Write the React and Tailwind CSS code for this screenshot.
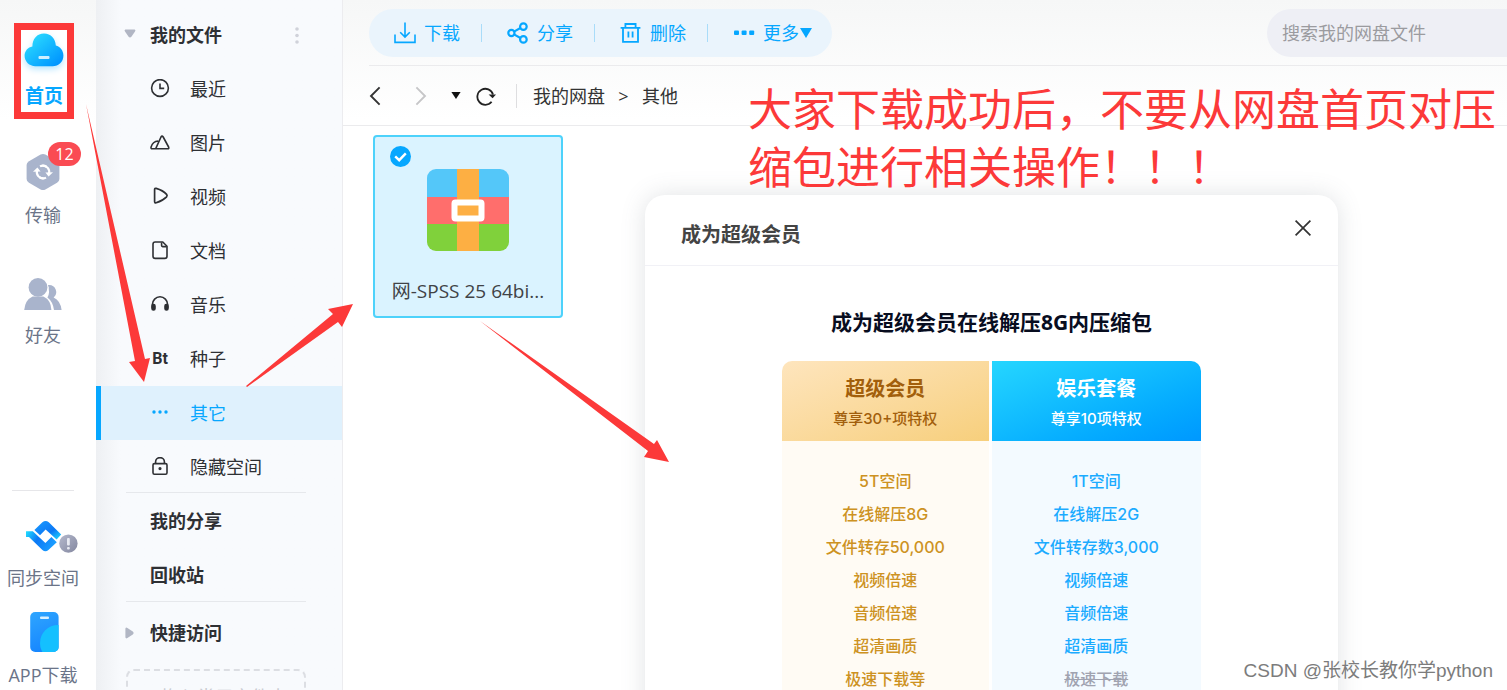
import React, { useState } from 'react';
import clsx from 'clsx';

// Outline icons of the category list
const ClockIcon = () => (
  <svg width="20" height="20" viewBox="0 0 20 20" fill="none" stroke="currentColor" strokeWidth="1.6">
    <circle cx="10" cy="9" r="8.4" />
    <path d="M10 4.6V9.4H14.2" />
  </svg>
);

const PictureIcon = () => (
  <svg width="20" height="20" viewBox="0 0 20 20" fill="none" stroke="currentColor" strokeWidth="1.6" strokeLinejoin="round">
    <path d="M5.6 15.8L11 4Q12 2.2 13.2 4L18.6 14Q19.4 15.8 17.6 15.8H2.2Q0.8 15.8 1 14.2Q2.6 8.4 8.2 8" />
  </svg>
);

const PlayIcon = () => (
  <svg width="20" height="20" viewBox="0 0 20 20" fill="none" stroke="currentColor" strokeWidth="1.7" strokeLinejoin="round">
    <path d="M4.6 2.6Q4.6 1 6.2 1.4Q13 3.4 16.6 7.4Q17.6 8.6 16.6 9.8Q13 13.4 6.2 15.8Q4.6 16.2 4.6 14.6Z" />
  </svg>
);

const DocIcon = () => (
  <svg width="20" height="20" viewBox="0 0 20 20" fill="none" stroke="currentColor" strokeWidth="1.6" strokeLinejoin="round">
    <path d="M12.8 1H5.2Q3 1 3 3.2V15.2Q3 17.4 5.2 17.4H14.8Q17 17.4 17 15.2V5.2Z" />
    <path d="M11.6 1.4V4.6Q11.6 5.6 12.6 5.6H16.6" />
  </svg>
);

const HeadphoneIcon = () => (
  <svg width="20" height="20" viewBox="0 0 20 20" fill="none" stroke="currentColor" strokeWidth="1.6">
    <path d="M2.4 13V9.6A7.6 7.8 0 0 1 17.6 9.6V13" />
    <rect x="2" y="9.6" width="3" height="5.4" rx="1.4" fill="currentColor" />
    <rect x="15" y="9.6" width="3" height="5.4" rx="1.4" fill="currentColor" />
  </svg>
);

const DotsIcon = () => (
  <svg width="20" height="20" viewBox="0 0 20 20" fill="currentColor">
    <circle cx="4" cy="9" r="1.7" />
    <circle cx="10" cy="9" r="1.7" />
    <circle cx="16" cy="9" r="1.7" />
  </svg>
);

const LockIcon = () => (
  <svg width="20" height="20" viewBox="0 0 20 20" fill="none" stroke="currentColor" strokeWidth="1.6">
    <rect x="3" y="6.6" width="14" height="10.6" rx="1.4" />
    <path d="M5.6 6.6V4.8A4.4 4.2 0 0 1 14.4 4.8V6.6" />
    <circle cx="10" cy="11.6" r="0.8" fill="currentColor" />
  </svg>
);

const BtIcon = () => <span className="font-['Roboto'] text-base font-bold leading-5">Bt</span>;

// Icons of the left rail
const CloudIcon = () => (
  <svg width="40" height="34" viewBox="0 0 40 34" className="shrink-0 drop-shadow-md drop-shadow-sky-200">
    <defs>
      <linearGradient id="cloud" x1="0.1" y1="0.1" x2="0.9" y2="0.9">
        <stop offset="0" stopColor="#2bdcff" />
        <stop offset="1" stopColor="#0095ff" />
      </linearGradient>
    </defs>
    <path d="M8.4 13.4C8.4 6 13 0.6 20 0.6S31.4 6 31.8 12.6C36 13.6 39.4 17.6 39.4 22.4C39.4 28.8 34.6 33.2 28.6 33.2H11.4C5.4 33.2 0.6 28.8 0.6 22.6C0.6 18 4 14 8.4 13.4Z" fill="url(#cloud)" />
    <rect x="14.5" y="23" width="11" height="3" rx="1" fill="#fff" opacity="0.8" />
  </svg>
);

const TransferIcon = () => (
  <svg width="34" height="38" viewBox="0 0 34 38" fill="none">
    <path d="M14.6 1.6Q17 0.4 19.4 1.6L31 8.2Q33.4 9.8 33.4 12V26Q33.4 28.4 31 29.8L19.4 36.4Q17 37.6 14.6 36.4L3 29.8Q0.6 28.4 0.6 26V12Q0.6 9.8 3 8.2Z" fill="#a9b4cc" />
    <g stroke="#fff" strokeWidth="2.2">
      <path d="M11 17.4A6.4 6.4 0 0 0 17.6 25.4" />
      <path d="M23 20.6A6.4 6.4 0 0 0 16.4 12.6" />
      <path d="M13.4 24.2A6.4 6.4 0 0 0 20 24.6M20.6 13.8A6.4 6.4 0 0 0 14 13.4" />
    </g>
    <path d="M7 18.8L11.4 14.4L14.6 18.4Z" fill="#fff" />
    <path d="M27 19.2L22.6 23.6L19.4 19.6Z" fill="#fff" />
  </svg>
);

const FriendsIcon = () => (
  <svg width="38" height="34" viewBox="0 0 38 34" fill="#a9b4cc">
    <path d="M25 8A7 7 0 0 1 29.6 20.4Q36.6 23.6 37.6 33H30Q28.8 24.6 23.4 20.6Q26.6 15 23.6 8Z" />
    <circle cx="14" cy="10.6" r="10.6" fill="#fff" />
    <circle cx="14" cy="10.4" r="9.4" />
    <path d="M0.2 33Q1.2 23 8.6 19.6H19.4Q26.8 23 27.4 33Z" />
  </svg>
);

const SyncIcon = () => (
  <svg width="54" height="36" viewBox="0 0 54 36" className="ml-4">
    <defs>
      <linearGradient id="syncA" x1="0" y1="0" x2="1" y2="0.4">
        <stop offset="0" stopColor="#20e0ff" />
        <stop offset="0.45" stopColor="#0c78f5" />
        <stop offset="1" stopColor="#1a9cff" />
      </linearGradient>
      <linearGradient id="syncB" x1="0" y1="0" x2="1" y2="1">
        <stop offset="0" stopColor="#1a9cff" />
        <stop offset="0.6" stopColor="#0c78f5" />
        <stop offset="1" stopColor="#20e0ff" />
      </linearGradient>
      <linearGradient id="alert" x1="0" y1="0" x2="1" y2="1">
        <stop offset="0" stopColor="#b5b9cd" />
        <stop offset="1" stopColor="#83879f" />
      </linearGradient>
    </defs>
    <path d="M10.4 11L18.4 3.2Q21.6 0.6 24.8 3.2L37.2 15.6L32.6 20.6L21.6 10.4L16 16.2Z" fill="url(#syncB)" />
    <path d="M2 12.2H8.8L21.4 24L27.4 18L32.8 23.2L24.4 31Q21.6 33.6 18.4 31L5 18H2Z" fill="url(#syncA)" />
    <circle cx="44.4" cy="24.6" r="9.2" fill="url(#alert)" />
    <rect x="43" y="19" width="2.8" height="7.6" rx="1" fill="#e8eaf2" />
    <rect x="43" y="28" width="2.8" height="2.4" rx="1" fill="#e8eaf2" />
  </svg>
);

const PhoneIcon = () => (
  <svg width="34" height="40" viewBox="-4 0 34 40">
    <defs>
      <linearGradient id="phone" x1="0" y1="0" x2="0.3" y2="1">
        <stop offset="0" stopColor="#2fa6ff" />
        <stop offset="1" stopColor="#1787ff" />
      </linearGradient>
      <clipPath id="phoneClip">
        <rect x="0.2" y="0" width="28.4" height="40" rx="5" />
      </clipPath>
    </defs>
    <rect x="0.2" y="0" width="28.4" height="40" rx="5" fill="url(#phone)" />
    <circle cx="28" cy="31" r="18" fill="#14c0ff" clipPath="url(#phoneClip)" />
    <rect x="10" y="4.4" width="9" height="2.6" rx="1" fill="#d8f0ff" />
  </svg>
);

// Toolbar icons
const DownloadIcon = () => (
  <svg width="22" height="22" viewBox="0 0 22 22" fill="none" stroke="currentColor" strokeWidth="1.6">
    <path d="M1 12.6V20.4H21V12.6" />
    <path d="M11 0.6V15M6.2 10.2L11 15L15.8 10.2" />
  </svg>
);

const ShareIcon = () => (
  <svg width="22" height="22" viewBox="0 0 22 22" fill="none" stroke="currentColor" strokeWidth="2.2">
    <circle cx="4.4" cy="11" r="3.1" />
    <circle cx="16.4" cy="4.6" r="3.3" />
    <circle cx="16.4" cy="17.4" r="3.3" />
    <path d="M7 9.6L13.4 6M7 12.4L13.4 16" />
  </svg>
);

const TrashIcon = () => (
  <svg width="22" height="22" viewBox="0 0 22 22" fill="none" stroke="currentColor" strokeWidth="1.8">
    <path d="M0.6 5.8H20.4M5.4 5.4V2H15.6V5.4M3 6V19.8H18V6" />
    <path d="M8.4 9.6V15.4M12.6 9.6V15.4" />
  </svg>
);

const MoreIcon = () => (
  <svg width="22" height="22" viewBox="0 0 22 22" fill="currentColor">
    <rect x="1" y="8.4" width="5" height="4.6" rx="1" />
    <rect x="8.6" y="8.4" width="5" height="4.6" rx="1" />
    <rect x="16.2" y="8.4" width="5" height="4.6" rx="1" />
  </svg>
);

const ArchiveIcon = () => (
  <svg width="82" height="82" viewBox="0 0 82 82">
    <defs>
      <clipPath id="archive">
        <rect width="82" height="82" rx="9" />
      </clipPath>
    </defs>
    <g clipPath="url(#archive)">
      <rect width="82" height="28" fill="#54c7f9" />
      <rect y="28" width="82" height="27" fill="#ff6e6c" />
      <rect y="55" width="82" height="27" fill="#80d13b" />
      <rect x="30" width="22" height="82" fill="#fdaf43" />
    </g>
    <rect x="27.5" y="33.5" width="27" height="16" rx="1" fill="#fdaf43" stroke="#fff" strokeWidth="6" />
  </svg>
);

const railTop = [
  { label: '传输', icon: TransferIcon, badge: 12 },
  { label: '好友', icon: FriendsIcon },
];

const railBottom = [
  { label: '同步空间', icon: SyncIcon },
  { label: 'APP下载', icon: PhoneIcon },
];

const categories = [
  { label: '最近', icon: ClockIcon },
  { label: '图片', icon: PictureIcon },
  { label: '视频', icon: PlayIcon },
  { label: '文档', icon: DocIcon },
  { label: '音乐', icon: HeadphoneIcon },
  { label: '种子', icon: BtIcon },
  { label: '其它', icon: DotsIcon },
  { label: '隐藏空间', icon: LockIcon },
];

const actions = [
  { label: '下载', icon: DownloadIcon },
  { label: '分享', icon: ShareIcon },
  { label: '删除', icon: TrashIcon },
  { label: '更多', icon: MoreIcon, menu: true },
];

const plans = [
  ['5T空间', '1T空间'],
  ['在线解压8G', '在线解压2G'],
  ['文件转存50,000', '文件转存数3,000'],
  ['视频倍速', '视频倍速'],
  ['音频倍速', '音频倍速'],
  ['超清画质', '超清画质'],
  ['极速下载等', '极速下载'],
];

const Rail = () => (
  <nav className="flex w-24 shrink-0 flex-col text-lg leading-6 text-[#6b7488]">
    <a href="#home" className="ml-[14px] mt-[23px] flex h-24 w-[60px] shrink-0 flex-col items-center border-[7px] border-[#fc3939] bg-white pt-[3px] font-bold text-[#06a7ff]">
      <CloudIcon />
      <span className="mt-[17px] text-[19px]">首页</span>
    </a>
    <div className="mt-[34px] flex w-[86px] flex-col gap-[50px]">
      {railTop.map(({ label, icon: Icon, badge }) => (
        <a key={label} href="#rail" className="relative flex flex-col items-center gap-3">
          <Icon />
          {badge && (
            <span className="absolute -top-[11px] left-12 h-6 w-[33px] rounded-full bg-[#fa4b53] text-center text-base leading-6 text-white">
              {badge}
            </span>
          )}
          <span>{label}</span>
        </a>
      ))}
    </div>
    <hr className="ml-3 mr-[22px] mt-[143px] border-[#e6e6e9]" />
    <div className="mt-7 flex w-[86px] flex-col items-center gap-[22px]">
      {railBottom.map(({ label, icon: Icon }) => (
        <a key={label} href="#rail" className="flex flex-col items-center gap-[11px] whitespace-nowrap">
          <Icon />
          <span>{label}</span>
        </a>
      ))}
    </div>
  </nav>
);

const Sidebar = ({ active, onSelect }) => (
  <aside className="flex w-[247px] shrink-0 flex-col border-r border-[#ececef] bg-linear-to-r from-[#eef0f3] to-[#f8fafd] to-10% pt-2 text-lg text-[#2e3034]">
    <div className="flex h-[54px] shrink-0 items-center font-bold">
      <svg width="12" height="9" viewBox="0 0 12 9" className="mb-1 ml-7" fill="#b1b6c4">
        <path d="M1.4 0.4H10.6Q12 1 11 2.4L7.4 7.8Q6 9.4 4.6 7.8L1 2.4Q0 1 1.4 0.4Z" />
      </svg>
      <h2 className="ml-[14px] flex-1">我的文件</h2>
      <button aria-label="文件选项" className="mr-[43px] text-[#d0d2da]">
        <svg width="4" height="17" viewBox="0 0 4 17" fill="currentColor">
          <circle cx="2" cy="2" r="1.8" />
          <circle cx="2" cy="8.5" r="1.8" />
          <circle cx="2" cy="15" r="1.8" />
        </svg>
      </button>
    </div>
    {categories.map(({ label, icon: Icon }) => (
      <button
        key={label}
        onClick={() => onSelect(label)}
        className={clsx(
          'flex h-[54px] shrink-0 items-center gap-5 border-l-[5px] pl-[49px]',
          active === label ? 'border-[#06a7ff] bg-[#dff1fd] text-[#06a7ff]' : 'border-transparent'
        )}
      >
        <span className="flex w-5 justify-center">
          <Icon />
        </span>
        <span>{label}</span>
      </button>
    ))}
    <div className="-mt-[2px] ml-[30px] mr-9 shrink-0 border-y border-[#e6e8ec] font-bold">
      <a href="#shares" className="flex h-[54px] items-center pl-6 pt-[2px]">我的分享</a>
      <a href="#trash" className="flex h-[54px] items-center pl-6 pt-[2px]">回收站</a>
    </div>
    <div className="flex h-[62px] shrink-0 items-center pl-[29px] font-bold">
      <svg width="9" height="12" viewBox="0 0 9 12" fill="#b1b6c4">
        <path d="M0.4 1.4Q1 0 2.4 1L7.8 4.6Q9.4 6 7.8 7.4L2.4 11Q1 12 0.4 10.6Z" />
      </svg>
      <h2 className="ml-4">快捷访问</h2>
    </div>
    <div className="ml-[30px] mr-9 mt-[5px] h-[60px] shrink-0 rounded-lg border-2 border-dashed border-[#dcdee3] pl-4 pt-3 text-center text-[#c9cbd1]">
      拖入常用文件夹
    </div>
  </aside>
);

const Toolbar = () => (
  <header className="ml-[26px] flex h-[66px] items-start justify-between border-b border-[#ebebed] pt-[9px]">
    <div className="flex h-12 items-center rounded-full bg-[#eaf4fc] px-[25px] text-lg text-[#06a7ff]">
      {actions.map(({ label, icon: Icon, menu }, i) => (
        <React.Fragment key={label}>
          {i > 0 && <span className="ml-[21px] mr-[25px] h-[18px] w-px bg-[#a9dcf9]" />}
          <button className="flex items-center gap-2">
            <Icon />
            <span className="flex items-center">
              {label}
              {menu && (
                <svg width="14" height="10" viewBox="0 0 14 10" className="-mr-[6px]" fill="currentColor">
                  <path d="M1 0H13L7 10Z" />
                </svg>
              )}
            </span>
          </button>
        </React.Fragment>
      ))}
    </div>
    <input
      type="text"
      aria-label="搜索我的网盘文件"
      placeholder="搜索我的网盘文件"
      className="h-12 w-60 rounded-l-full bg-[#eeeff5] pl-[15px] text-lg outline-none placeholder:text-[#9b9b9f]"
    />
  </header>
);

const Breadcrumb = () => (
  <div className="flex h-[60px] items-center border-b border-[#ebebed] pl-[26px] text-lg text-[#333]">
    <button aria-label="后退">
      <svg width="12" height="20" viewBox="0 0 12 20" fill="none" stroke="#333" strokeWidth="1.9">
        <path d="M10.6 1.4L2 10L10.6 18.6" />
      </svg>
    </button>
    <button aria-label="前进" className="ml-[34px]">
      <svg width="12" height="20" viewBox="0 0 12 20" fill="none" stroke="#c6c6c8" strokeWidth="1.9">
        <path d="M1.4 1.4L10 10L1.4 18.6" />
      </svg>
    </button>
    <button aria-label="历史" className="ml-6">
      <svg width="10" height="7" viewBox="0 0 10 7" fill="#111">
        <path d="M0.4 0H9.6L5 7Z" />
      </svg>
    </button>
    <button aria-label="刷新" className="ml-[15px]">
      <svg width="20" height="20" viewBox="0 0 20 20" fill="none" stroke="#222" strokeWidth="1.8">
        <path d="M15.6 15.8A8 8 0 1 1 17 8.4" />
        <path d="M12.6 8.4H20.2L16.6 12.2Z" fill="#222" stroke="none" />
      </svg>
    </button>
    <span className="ml-5 h-6 w-px bg-[#dedee0]" />
    <a href="#root-dir" className="ml-4">我的网盘</a>
    <span className="mx-[13px] w-[11px] text-center">&gt;</span>
    <a href="#other-dir">其他</a>
  </div>
);

const FileCard = ({ name, checked, onToggle }) => (
  <label className="relative ml-[30px] mt-[9px] flex h-[183px] w-[190px] flex-col items-center rounded-sm border-2 border-[#4dd2fb] bg-[#daf3ff] pt-8 text-[19px] leading-7 text-[#404246]">
    <input
      type="checkbox"
      checked={checked}
      onChange={onToggle}
      className="absolute left-[15px] top-[9px] size-[21px] appearance-none rounded-full bg-[#06a7ff]"
    />
    <svg width="21" height="21" viewBox="0 0 21 21" className="absolute left-[15px] top-[9px]" fill="none" stroke="#fff" strokeWidth="2.4">
      <path d="M5.2 10.4L9.2 14.2L15.8 7.4" />
    </svg>
    <ArchiveIcon />
    <span className="mt-[26px]">{name}</span>
  </label>
);

const MemberDialog = () => (
  <section
    role="dialog"
    aria-labelledby="member-title"
    className="absolute left-[302px] top-[195px] h-[560px] w-[693px] rounded-[20px] bg-white shadow-[0_0_24px_rgba(90,100,110,0.18)]"
  >
    <div className="flex h-[71px] items-center justify-between border-b border-[#f1f1f6] pl-9 pr-[26px]">
      <h2 id="member-title" className="pt-[10px] text-[20px] font-bold text-[#444]">成为超级会员</h2>
      <button aria-label="关闭" className="mb-[5px]">
        <svg width="18" height="18" viewBox="0 0 18 18" fill="none" stroke="#333" strokeWidth="1.7">
          <path d="M1.6 1.6L16.4 16.4M16.4 1.6L1.6 16.4" />
        </svg>
      </button>
    </div>
    <h3 className="mt-10 text-center text-[21px] font-bold leading-8 text-[#080d1f]">成为超级会员在线解压8G内压缩包</h3>
    <table className="mx-auto mt-[23px] w-[419px] table-fixed border-separate border-spacing-0 text-center font-['Inter','Noto_Sans_CJK_SC',sans-serif] text-base font-medium leading-[33px]">
      <thead>
        <tr className="h-20 text-[15px] leading-6">
          <th className="rounded-tl-[10px] border-r-[3px] border-white bg-linear-to-br from-[#fee5bd] to-[#f7cf7c] font-medium text-[#a25f0c]">
            <div className="text-[20px] font-bold leading-9">超级会员</div>
            尊享30+项特权
          </th>
          <th className="rounded-tr-[10px] bg-linear-to-br from-[#25d6ff] to-[#0098ff] font-medium text-white">
            <div className="text-[20px] font-bold leading-9">娱乐套餐</div>
            尊享10项特权
          </th>
        </tr>
      </thead>
      <tbody className="[&>tr:first-child>td]:pt-6">
        {plans.map(([vip, fun], i) => (
          <tr key={vip}>
            <td className="border-r-[3px] border-white bg-[#fffbf4] text-[#cd9222]">{vip}</td>
            <td className={clsx('bg-[#f3faff]', i === plans.length - 1 ? 'text-[#a0a3b0] line-through' : 'text-[#1babff]')}>
              {fun}
            </td>
          </tr>
        ))}
      </tbody>
    </table>
  </section>
);

// Red arrows and the note drawn over the window
const Annotations = () => (
  <div className="pointer-events-none absolute inset-0 text-[#fc3939]">
    <svg width="700" height="500" viewBox="0 0 700 500" fill="currentColor">
      <path d="M86 104L145 359L150 358L144 382L129 362L135 361Z" />
      <path d="M246 386L333 314L328 309L353 304L342 327L338 322L247 387Z" />
      <path d="M480 321L654 444L657 440L669 462L644 457L648 451Z" />
    </svg>
    <p className="absolute left-[748px] top-20 w-[750px] text-[44px] leading-[58px]">
      大家下载成功后，不要从网盘首页对压
      <br />
      缩包进行相关操作！！！
    </p>
  </div>
);

function App() {
  const [active, setActive] = useState('其它');
  const [checked, setChecked] = useState(true);

  return (
    <div className="relative flex h-screen overflow-hidden bg-linear-to-b from-[#f6f7f7] to-white to-[120px] font-['Open_Sans','Noto_Sans_CJK_SC',sans-serif]">
      <Rail />
      <Sidebar active={active} onSelect={setActive} />
      <main className="relative min-w-0 flex-1">
        <Toolbar />
        <Breadcrumb />
        <FileCard name="网-SPSS 25 64bi..." checked={checked} onToggle={() => setChecked(!checked)} />
        <MemberDialog />
      </main>
      <Annotations />
      <footer className="absolute bottom-[7px] right-[14px] font-['Liberation_Sans','Noto_Sans_CJK_SC',sans-serif] text-[19px] leading-6 text-[#7c7c7c] [text-shadow:0_0_2px_white]">
        CSDN @张校长教你学python
      </footer>
    </div>
  );
}

export default App;
